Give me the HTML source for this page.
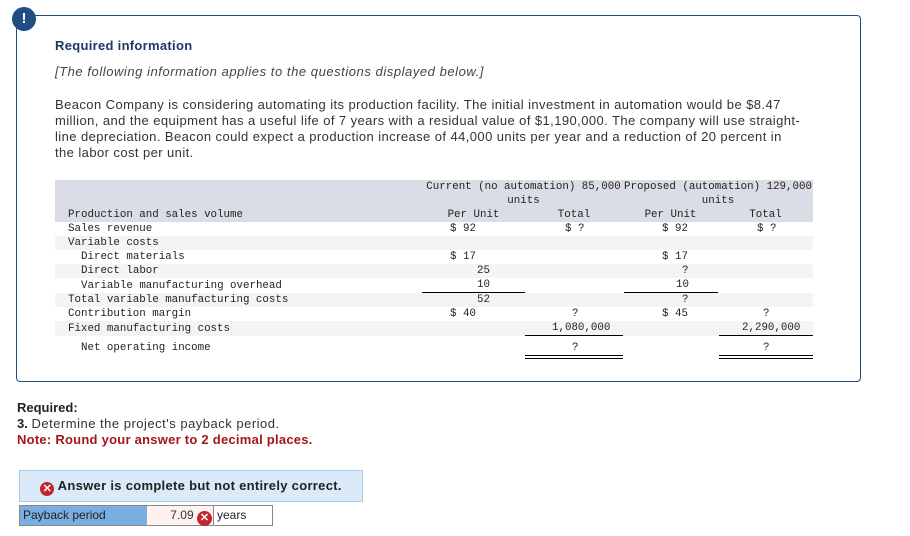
<!DOCTYPE html>
<html><head><meta charset="utf-8"><style>
body{margin:0;width:910px;height:536px;background:#fff;font-family:"Liberation Sans",sans-serif;position:relative;overflow:hidden;color:#333}
.box{position:absolute;left:16px;top:15px;width:843px;height:365px;border:1.5px solid #1f4d84;border-radius:4px}
.ic{position:absolute;left:12px;top:7px;width:24px;height:24px;border-radius:50%;background:#1f4d84;color:#fff;font-weight:bold;font-size:15px;text-align:center;line-height:24px}
.t{position:absolute;left:55px;font-size:13px;white-space:nowrap}
.mono{font-family:"Liberation Mono","DejaVu Sans Mono",monospace;font-size:10.8px;color:#222}
.c{position:absolute;text-align:center;line-height:14px}
.l{position:absolute;line-height:14px}
.hl{position:absolute;height:1px;background:#000}
</style></head><body>
<div class="box"></div>
<div class="ic">!</div>
<div class="t" style="top:38px;font-weight:bold;color:#1c3a63;letter-spacing:0.3px">Required information</div>
<div class="t" style="top:64px;font-style:italic;color:#444;letter-spacing:0.55px">[The following information applies to the questions displayed below.]</div>
<div class="t" style="top:97px;line-height:16px;color:#333;letter-spacing:0.42px">Beacon Company is considering automating its production facility. The initial investment in automation would be $8.47<br>million, and the equipment has a useful life of 7 years with a residual value of $1,190,000. The company will use straight-<br>line depreciation. Beacon could expect a production increase of 44,000 units per year and a reduction of 20 percent in<br>the labor cost per unit.</div>

<div class="mono">
<div style="position:absolute;left:55px;top:180px;width:758px;height:42px;background:#dadde6"></div>
<div class="c" style="left:422px;top:180px;width:203px">Current (no automation) 85,000<br>units</div>
<div class="c" style="left:623px;top:180px;width:190px">Proposed (automation) 129,000<br>units</div>
<div class="l" style="left:68px;top:208px">Production and sales volume</div>
<div class="c" style="left:422px;top:208px;width:103px">Per Unit</div>
<div class="c" style="left:525px;top:208px;width:98px">Total</div>
<div class="c" style="left:623px;top:208px;width:95px">Per Unit</div>
<div class="c" style="left:718px;top:208px;width:95px">Total</div>

<div style="position:absolute;left:55px;top:236px;width:758px;height:14px;background:#f4f4f4"></div>
<div style="position:absolute;left:55px;top:264px;width:758px;height:14px;background:#f4f4f4"></div>
<div style="position:absolute;left:55px;top:293px;width:758px;height:14px;background:#f4f4f4"></div>
<div style="position:absolute;left:55px;top:321px;width:758px;height:15px;background:#f4f4f4"></div>

<div class="l" style="left:68px;top:222px">Sales revenue</div>
<div class="l" style="left:68px;top:236px">Variable costs</div>
<div class="l" style="left:81px;top:250px">Direct materials</div>
<div class="l" style="left:81px;top:264px">Direct labor</div>
<div class="l" style="left:81px;top:279px">Variable manufacturing overhead</div>
<div class="l" style="left:68px;top:293px">Total variable manufacturing costs</div>
<div class="l" style="left:68px;top:307px">Contribution margin</div>
<div class="l" style="left:68px;top:322px">Fixed manufacturing costs</div>
<div class="l" style="left:81px;top:341px">Net operating income</div>

<div class="l" style="left:450px;top:222px">$ 92</div>
<div class="l" style="left:450px;top:250px">$ 17</div>
<div class="l" style="left:477px;top:264px">25</div>
<div class="l" style="left:477px;top:278px">10</div>
<div class="l" style="left:477px;top:293px">52</div>
<div class="l" style="left:450px;top:307px">$ 40</div>
<div class="l" style="left:565px;top:222px">$ ?</div>
<div class="l" style="left:572px;top:307px">?</div>
<div class="l" style="left:552px;top:321px">1,080,000</div>
<div class="l" style="left:572px;top:341px">?</div>

<div class="l" style="left:662px;top:222px">$ 92</div>
<div class="l" style="left:662px;top:250px">$ 17</div>
<div class="l" style="left:682px;top:264px">?</div>
<div class="l" style="left:676px;top:278px">10</div>
<div class="l" style="left:682px;top:293px">?</div>
<div class="l" style="left:662px;top:307px">$ 45</div>
<div class="l" style="left:757px;top:222px">$ ?</div>
<div class="l" style="left:763px;top:307px">?</div>
<div class="l" style="left:742px;top:321px">2,290,000</div>
<div class="l" style="left:763px;top:341px">?</div>

<div class="hl" style="left:422px;top:292px;width:103px"></div>
<div class="hl" style="left:624px;top:292px;width:94px"></div>
<div class="hl" style="left:525px;top:335px;width:98px"></div>
<div class="hl" style="left:719px;top:335px;width:94px"></div>
<div class="hl" style="left:525px;top:355px;width:98px"></div>
<div class="hl" style="left:525px;top:358px;width:98px"></div>
<div class="hl" style="left:719px;top:355px;width:94px"></div>
<div class="hl" style="left:719px;top:358px;width:94px"></div>
</div>

<div style="position:absolute;left:17px;top:400px;font-size:13px;line-height:16px;color:#333;white-space:nowrap">
<b style="color:#222">Required:</b><br><b style="color:#222">3.</b> <span style="letter-spacing:0.5px">Determine the project's payback period.</span><br><b style="color:#a3161c;letter-spacing:0.25px">Note: Round your answer to 2 decimal places.</b></div>

<div style="position:absolute;left:19px;top:470px;width:342px;height:30px;background:#dbeaf8;border:1px solid #a9cbe9;text-align:center;line-height:30px;font-weight:bold;font-size:13px;color:#222;letter-spacing:0.3px;white-space:nowrap">
<span style="display:inline-block;width:14px;height:14px;border-radius:50%;background:#c0262d;color:#fff;font-size:11px;line-height:14px;vertical-align:-2px;letter-spacing:0">✕</span> Answer is complete but not entirely correct.</div>

<div style="position:absolute;left:19px;top:505px;height:19px;background:#7aaee0;border:1px solid #888;font-size:12px;line-height:19px;padding-left:3px;width:124px;color:#222">Payback period</div>
<div style="position:absolute;left:147px;top:505px;width:66px;height:19px;background:#fdf2f0;border:1px solid #888;border-left:none;font-size:12px;line-height:19px;text-align:right;color:#333"><span>7.09</span> <span style="display:inline-block;width:15px;height:15px;border-radius:50%;background:#c0262d;color:#fff;font-size:11px;line-height:15px;text-align:center;font-weight:bold;vertical-align:-2px;margin-right:1px">✕</span></div>
<div style="position:absolute;left:214px;top:505px;width:59px;height:21px;border:1px solid #888;border-left:none;font-size:12px;line-height:19px;padding-left:3px;box-sizing:border-box;color:#222">years</div>
</body></html>
